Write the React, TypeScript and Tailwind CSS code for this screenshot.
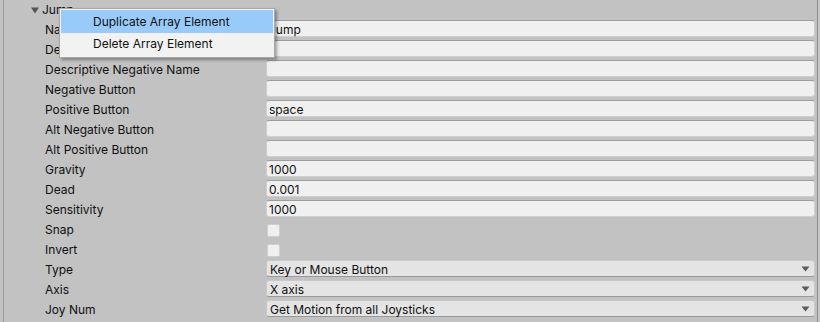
import React from 'react';

type Row = { label: string; kind: 'text' | 'check' | 'select'; value?: string };

const rows: Row[] = [
  { label: 'Name', kind: 'text', value: 'Jump' },
  { label: 'Descriptive Name', kind: 'text', value: '' },
  { label: 'Descriptive Negative Name', kind: 'text', value: '' },
  { label: 'Negative Button', kind: 'text', value: '' },
  { label: 'Positive Button', kind: 'text', value: 'space' },
  { label: 'Alt Negative Button', kind: 'text', value: '' },
  { label: 'Alt Positive Button', kind: 'text', value: '' },
  { label: 'Gravity', kind: 'text', value: '1000' },
  { label: 'Dead', kind: 'text', value: '0.001' },
  { label: 'Sensitivity', kind: 'text', value: '1000' },
  { label: 'Snap', kind: 'check' },
  { label: 'Invert', kind: 'check' },
  { label: 'Type', kind: 'select', value: 'Key or Mouse Button' },
  { label: 'Axis', kind: 'select', value: 'X axis' },
  { label: 'Joy Num', kind: 'select', value: 'Get Motion from all Joysticks' },
];

const Field = ({ row }: { row: Row }) => {
  if (row.kind === 'check') {
    return (
      <div className="h-[17px] flex items-center">
        <div className="w-[13px] h-[13px] ml-[1px] mt-[3px] rounded-[2px] bg-[#f0f0f0] border border-[#d0d0d0]" />
      </div>
    );
  }
  if (row.kind === 'select') {
    return (
      <div className="h-[17px] flex items-center justify-between rounded-[3px] bg-[#e4e4e4] border border-[#c8c8c8] border-b-[#999999] pl-[3px] pr-[4px]">
        <span className="leading-none pt-[2px]">{row.value}</span>
        <svg width="9" height="6" viewBox="0 0 9 6">
          <path d="M0.5 0.5 L8.5 0.5 L4.5 5.5 Z" fill="#5a5a5a" />
        </svg>
      </div>
    );
  }
  return (
    <div className="h-[17px] flex items-center rounded-[3px] bg-[#f0f0f0] border border-[#cfcfcf] border-t-[#9c9c9c] pl-[2px]">
      <span className="leading-none pt-[2px]">{row.value}</span>
    </div>
  );
};

export default function App() {
  return (
    <div
      className="relative w-[820px] h-[322px] overflow-hidden bg-[#c2c2c2] text-[12px] text-[#101010]"
      style={{ fontFamily: 'Inter, "Noto Sans", sans-serif' }}
    >
      <div className="flex h-full">
        <div className="w-[3px]" />
        <div className="w-[1px] bg-[#9a9a9a]" />
        <div className="flex-1 flex flex-col">
          <div className="h-[20px] flex items-center pl-[27px]">
            <svg width="8" height="7" viewBox="0 0 8 7" className="mr-[3px]">
              <path d="M0 0.5 L8 0.5 L4 6.5 Z" fill="#555555" />
            </svg>
            <span className="leading-none">Jump</span>
          </div>
          {rows.map((r) => (
            <div key={r.label} className="h-[20px] flex">
              <div className="w-[262px] pl-[41px] h-[19px] flex items-center shrink-0">
                <span className="leading-none">{r.label}</span>
              </div>
              <div className="flex-1 mr-[2px]">
                <Field row={r} />
              </div>
            </div>
          ))}
        </div>
        <div className="w-[1px] bg-[#8f8f8f]" />
        <div className="w-[2px] bg-[#c8c8c8]" />
      </div>

      <div className="absolute left-[59px] top-[8px] w-[216px] h-[50px] bg-[#f2f2f2] border border-[#a8a8a8] shadow-[2px_2px_3px_rgba(0,0,0,0.35)] p-[1px]">
        <div className="h-[23px] flex items-center pl-[32px] bg-[#99cbfa]">
          <span className="leading-none">Duplicate Array Element</span>
        </div>
        <div className="h-[21px] flex items-center pl-[32px]">
          <span className="leading-none">Delete Array Element</span>
        </div>
      </div>
    </div>
  );
}
